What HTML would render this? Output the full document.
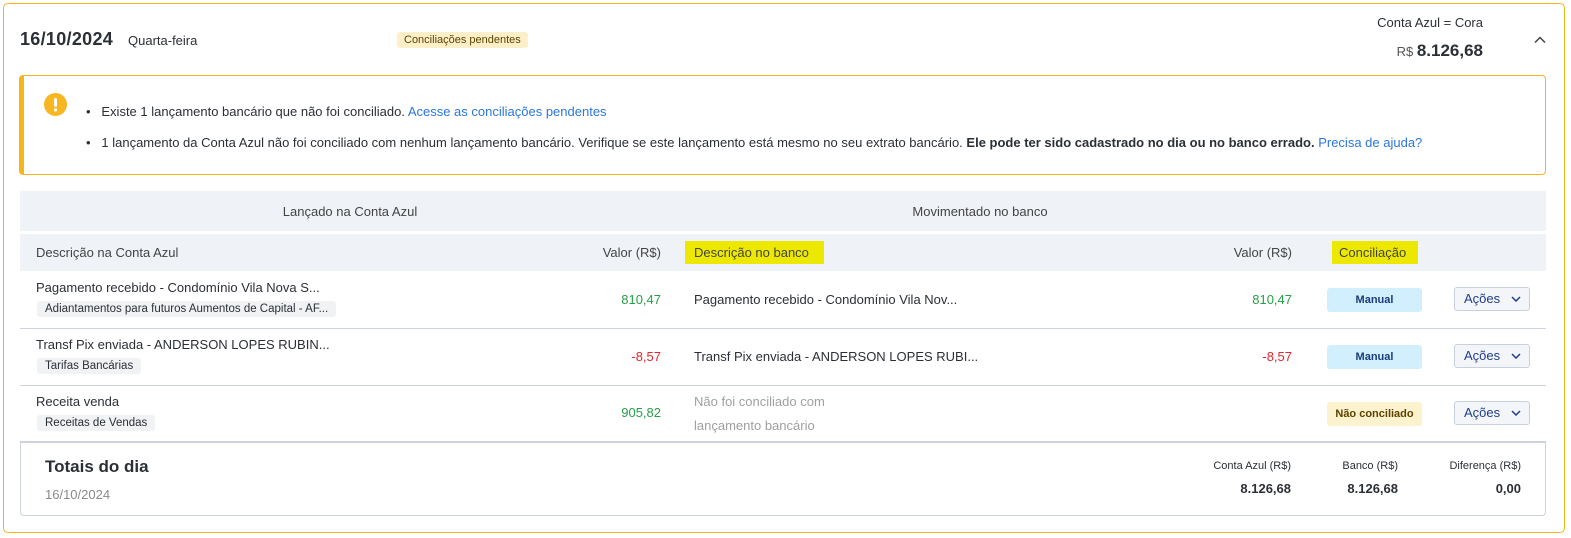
<!DOCTYPE html>
<html><head><meta charset="utf-8"><style>
*{box-sizing:border-box;margin:0;padding:0}
body{width:1571px;height:538px;background:#fff;font-family:"Liberation Sans",sans-serif;color:#2b2f36;font-size:13px;position:relative;overflow:hidden}
.a{position:absolute;white-space:nowrap}
.card{position:absolute;left:3px;top:3px;width:1562px;height:530px;border:1px solid #f5b51c;border-radius:5px}
.alert{position:absolute;left:19px;top:75px;width:1527px;height:100px;border:1px solid #f5b51c;border-left:5px solid #f5b51c;border-radius:4px}
.bg{position:absolute;background:#eff2f7}
.line{position:absolute;height:1px;background:#ccd3de;left:20px;width:1526px}
.tag{position:absolute;background:#f1f2f4;border-radius:3px;font-size:11.5px;padding:2px 8px;color:#2b2f36;white-space:nowrap}
.g{color:#26a046}.r{color:#e3262e}
.badge{position:absolute;left:1327px;width:95px;height:24px;border-radius:3px;font-size:11px;font-weight:bold;text-align:center;line-height:24px}
.btn{position:absolute;left:1454px;width:76px;height:24px;border:1px solid #c8d0dc;border-radius:3px;background:#f3f5f9;color:#1f3f8a;font-size:13px;line-height:22px;padding-left:9px}
.btn svg{position:absolute;right:8px;top:8px}
.hl{position:absolute;background:#ede800;height:23px}
</style></head><body>
<div class="card"></div>
<div class="a" style="left:20px;top:29px;font-size:18px;font-weight:bold;letter-spacing:0.3px">16/10/2024</div>
<div class="a" style="left:128px;top:33px;font-size:13px">Quarta-feira</div>
<div class="a" style="left:397px;top:32px;background:#fdf0c8;border-radius:3px;font-size:11px;padding:2px 7px;color:#5b4300">Conciliações pendentes</div>
<div class="a" style="right:88px;top:15px;font-size:13px">Conta Azul = Cora</div>
<div class="a" style="right:88px;top:41px;font-size:17px;font-weight:bold"><span style="font-size:13px;font-weight:normal;color:#555">R$ </span>8.126,68</div>
<svg class="a" style="left:1534px;top:36px" width="12" height="8" viewBox="0 0 12 8"><path d="M1 6.5 6 1.5 11 6.5" fill="none" stroke="#444" stroke-width="1.5"/></svg>
<div class="alert"></div>
<svg class="a" style="left:44px;top:93px" width="23" height="23"><circle cx="11.5" cy="11.5" r="11.5" fill="#f8b621"/><rect x="10" y="5" width="3" height="9" rx="1.5" fill="#fff"/><circle cx="11.5" cy="17" r="1.6" fill="#fff"/></svg>
<div class="a" style="left:86px;top:104px">•&nbsp;&nbsp;&nbsp;Existe 1 lançamento bancário que não foi conciliado. <span style="color:#2b76e0">Acesse as conciliações pendentes</span></div>
<div class="a" style="left:86px;top:135px">•&nbsp;&nbsp;&nbsp;1 lançamento da Conta Azul não foi conciliado com nenhum lançamento bancário. Verifique se este lançamento está mesmo no seu extrato bancário. <b>Ele pode ter sido cadastrado no dia ou no banco errado.</b> <span style="color:#2b76e0">Precisa de ajuda?</span></div>
<div class="bg" style="left:20px;top:191px;width:1526px;height:40px"></div>
<div class="bg" style="left:20px;top:234px;width:1526px;height:37px"></div>
<div class="a" style="left:20px;width:660px;top:204px;text-align:center;color:#444">Lançado na Conta Azul</div>
<div class="a" style="left:680px;width:600px;top:204px;text-align:center;color:#444">Movimentado no banco</div>
<div class="a" style="left:36px;top:245px;color:#444">Descrição na Conta Azul</div>
<div class="a" style="right:910px;top:245px;color:#444">Valor (R$)</div>
<div class="hl" style="left:685px;top:241px;width:139px"></div>
<div class="a" style="left:694px;top:245px;color:#444">Descrição no banco</div>
<div class="a" style="right:279px;top:245px;color:#444">Valor (R$)</div>
<div class="hl" style="left:1332px;top:241px;width:86px"></div>
<div class="a" style="left:1339px;top:245px;color:#444">Conciliação</div>
<!-- row1 -->
<div class="a" style="left:36px;top:280px">Pagamento recebido - Condomínio Vila Nova S...</div>
<div class="tag" style="left:37px;top:301px">Adiantamentos para futuros Aumentos de Capital - AF...</div>
<div class="a g" style="right:910px;top:292px">810,47</div>
<div class="a" style="left:694px;top:292px">Pagamento recebido - Condomínio Vila Nov...</div>
<div class="a g" style="right:279px;top:292px">810,47</div>
<div class="badge" style="top:288px;background:#d2effd;color:#1b3c7a">Manual</div>
<div class="btn" style="top:287px">Ações<svg width="10" height="6"><path d="M1 1 5 5 9 1" fill="none" stroke="#1f3f8a" stroke-width="1.5"/></svg></div>
<div class="line" style="top:328px"></div>
<!-- row2 -->
<div class="a" style="left:36px;top:337px">Transf Pix enviada - ANDERSON LOPES RUBIN...</div>
<div class="tag" style="left:37px;top:358px">Tarifas Bancárias</div>
<div class="a r" style="right:910px;top:349px">-8,57</div>
<div class="a" style="left:694px;top:349px">Transf Pix enviada - ANDERSON LOPES RUBI...</div>
<div class="a r" style="right:279px;top:349px">-8,57</div>
<div class="badge" style="top:345px;background:#d2effd;color:#1b3c7a">Manual</div>
<div class="btn" style="top:344px">Ações<svg width="10" height="6"><path d="M1 1 5 5 9 1" fill="none" stroke="#1f3f8a" stroke-width="1.5"/></svg></div>
<div class="line" style="top:385px"></div>
<!-- row3 -->
<div class="a" style="left:36px;top:394px">Receita venda</div>
<div class="tag" style="left:37px;top:415px">Receitas de Vendas</div>
<div class="a g" style="right:910px;top:405px">905,82</div>
<div class="a" style="left:694px;top:394px;color:#a0a0a0">Não foi conciliado com</div>
<div class="a" style="left:694px;top:418px;color:#a0a0a0">lançamento bancário</div>
<div class="badge" style="top:402px;background:#fdf2ce;color:#5b4300">Não conciliado</div>
<div class="btn" style="top:401px">Ações<svg width="10" height="6"><path d="M1 1 5 5 9 1" fill="none" stroke="#1f3f8a" stroke-width="1.5"/></svg></div>
<div class="line" style="top:441px;height:2px"></div>
<div style="position:absolute;left:20px;top:442px;width:1526px;height:74px;border:1px solid #ccd3de;border-top:none;border-radius:0 0 4px 4px"></div>
<div class="a" style="left:45px;top:457px;font-size:17px;font-weight:bold">Totais do dia</div>
<div class="a" style="left:45px;top:487px;color:#8a8a8a">16/10/2024</div>
<div class="a" style="right:280px;top:460px;font-size:11px">Conta Azul (R$)</div>
<div class="a" style="right:280px;top:481px;font-weight:bold">8.126,68</div>
<div class="a" style="right:173px;top:460px;font-size:11px">Banco (R$)</div>
<div class="a" style="right:173px;top:481px;font-weight:bold">8.126,68</div>
<div class="a" style="right:50px;top:460px;font-size:11px">Diferença (R$)</div>
<div class="a" style="right:50px;top:481px;font-weight:bold">0,00</div>
</body></html>
